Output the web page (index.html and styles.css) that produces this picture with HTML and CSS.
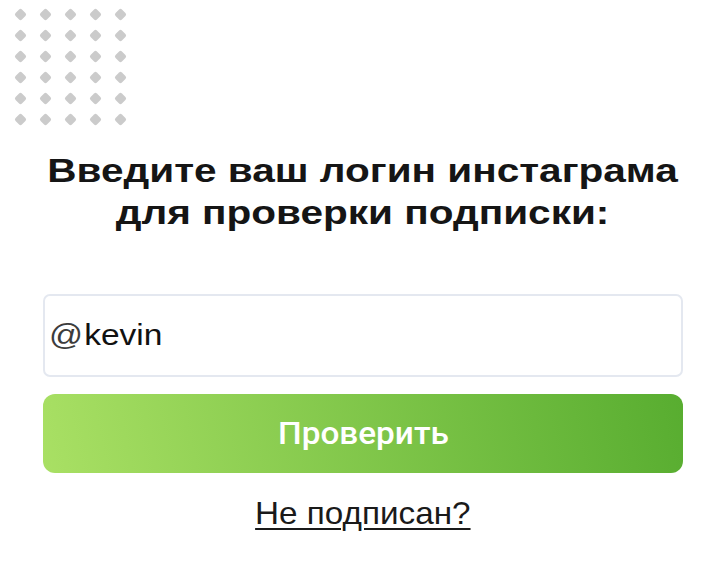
FILE: index.html
```html
<!DOCTYPE html>
<html lang="ru">
<head>
<meta charset="utf-8">
<link rel="stylesheet" href="styles.css">
</head>
<body>
<div class="dots">
  <i></i><i></i><i></i><i></i><i></i>
  <i></i><i></i><i></i><i></i><i></i>
  <i></i><i></i><i></i><i></i><i></i>
  <i></i><i></i><i></i><i></i><i></i>
  <i></i><i></i><i></i><i></i><i></i>
  <i></i><i></i><i></i><i></i><i></i>
</div>
<main class="card">
  <h1 class="title"><span class="wide-h">Введите ваш логин инстаграма<br>для проверки подписки:</span></h1>
  <div class="field"><span class="field-text"><span class="at">@</span><span class="value">kevin</span></span></div>
  <button class="btn"><span class="wide-b">Проверить</span></button>
  <a class="link" href="#"><span class="wide-l">Не подписан?</span></a>
</main>
</body>
</html>
```
FILE: styles.css
```css
html, body {
  margin: 0;
  padding: 0;
  background: #fff;
}
body {
  font-family: "Liberation Sans", Arial, sans-serif;
  color: #1a1a1a;
}
.dots {
  display: grid;
  grid-template-columns: repeat(5, 25px);
  grid-auto-rows: 21px;
  padding: 4px 0 0 8px;
  width: max-content;
}
.dots i {
  display: block;
  width: 9px;
  height: 9px;
  margin: auto;
  background: #cbcbcb;
  border-radius: 2px;
  transform: rotate(45deg);
}
.card {
  width: 640px;
  margin: 0 auto;
  display: flex;
  flex-direction: column;
  align-items: stretch;
}
.title {
  margin: 20px 0 0;
  font-size: 33.5px;
  line-height: 42px;
  font-weight: 700;
  text-align: center;
  color: #151515;
}
.wide-h {
  display: inline-block;
  transform: scaleX(1.21);
  transform-origin: center;
}
.field {
  margin-top: 60px;
  height: 83px;
  box-sizing: border-box;
  border: 2px solid #e4e8f0;
  border-radius: 7px;
  display: flex;
  align-items: center;
  padding-left: 4px;
  font-size: 29px;
}
.field-text {
  display: inline-block;
  transform: scaleX(1.155);
  transform-origin: left center;
}
.at {
  color: #3c3c3c;
  margin-right: 1px;
}
.value {
  color: #111;
}
.btn {
  margin-top: 17px;
  height: 79px;
  border: none;
  border-radius: 12px;
  background: linear-gradient(78deg, #a9e064 0%, #58ad30 100%);
  color: #fff;
  font-family: Roboto, "Liberation Sans", sans-serif;
  font-size: 31px;
  font-weight: 500;
  padding: 0;
}
.wide-b {
  display: inline-block;
  transform: scaleX(1.075);
  transform-origin: center;
}
.link {
  align-self: center;
  margin-top: 23px;
  font-size: 30.5px;
  color: #1a1a1a;
  text-decoration: underline;
  text-underline-offset: 4px;
  text-decoration-thickness: 2px;
}
.wide-l {
  display: inline-block;
  transform: scaleX(1.09);
  transform-origin: center;
  text-decoration: underline;
  text-underline-offset: 4px;
  text-decoration-thickness: 2px;
}
```
